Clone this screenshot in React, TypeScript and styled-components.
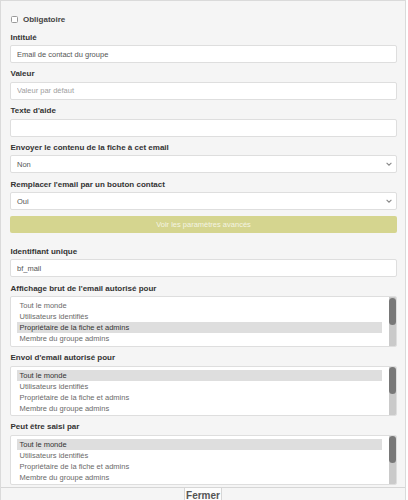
import React from "react"
import styled, { createGlobalStyle } from "styled-components"

const GlobalStyle = createGlobalStyle`
  html, body {
    margin: 0;
    background: #fff;
    font-family: "Liberation Sans", Arial, Helvetica, sans-serif;
  }
  * {
    box-sizing: border-box;
  }
`

const OPTIONS = [
  "Tout le monde",
  "Utilisateurs identifiés",
  "Propriétaire de la fiche et admins",
  "Membre du groupe admins",
  "Membre du groupe Equipe",
]

const Chevron = () => (
  <svg width="6" height="4" viewBox="0 0 6 4">
    <polyline points="0.6,0.8 3,3.2 5.4,0.8" fill="none" stroke="#8a8a8a" strokeWidth="1.1" />
  </svg>
)

const ListBox = ({ selected }: { selected: number }) => (
  <List>
    <Options>
      {OPTIONS.map((label, i) => (
        <Option key={label} $selected={i === selected}>
          {label}
        </Option>
      ))}
    </Options>
    <Track>
      <Thumb />
    </Track>
  </List>
)

const App = () => {
  return (
    <>
      <GlobalStyle />
      <Panel>
        <Body>
          <CheckRow>
            <CheckBox />
            <CheckLabel>Obligatoire</CheckLabel>
          </CheckRow>

          <Field>
            <Label>Intitulé</Label>
            <TextInput readOnly defaultValue="Email de contact du groupe" />
          </Field>
          <Field>
            <Label>Valeur</Label>
            <TextInput readOnly placeholder="Valeur par défaut" />
          </Field>
          <Field>
            <Label>Texte d'aide</Label>
            <TextInput readOnly />
          </Field>
          <Field>
            <Label>Envoyer le contenu de la fiche à cet email</Label>
            <SelectBox>
              <span>Non</span>
              <Chevron />
            </SelectBox>
          </Field>
          <Field>
            <Label>Remplacer l'email par un bouton contact</Label>
            <SelectBox>
              <span>Oui</span>
              <Chevron />
            </SelectBox>
          </Field>

          <AdvancedButton type="button">Voir les paramètres avancés</AdvancedButton>

          <Field>
            <Label>Identifiant unique</Label>
            <TextInput readOnly defaultValue="bf_mail" />
          </Field>
          <Field>
            <Label>Affichage brut de l'email autorisé pour</Label>
            <ListBox selected={2} />
          </Field>
          <Field>
            <Label>Envoi d'email autorisé pour</Label>
            <ListBox selected={0} />
          </Field>
          <Field>
            <Label>Peut être saisi par</Label>
            <ListBox selected={0} />
          </Field>
        </Body>
        <Footer>
          <CloseButton type="button">Fermer</CloseButton>
        </Footer>
      </Panel>
    </>
  )
}

export default App

const Panel = styled.div`
  width: 406px;
  height: 500px;
  display: flex;
  flex-direction: column;
  background: #f5f5f5;
  border: 1px solid #dadada;
  border-bottom: none;
  overflow: hidden;
`

const Body = styled.div`
  height: 486px;
  flex: none;
  overflow: hidden;
  padding: 13px 8px 0 9px;
`

const CheckRow = styled.div`
  display: flex;
  align-items: center;
  height: 10px;
  margin-bottom: 8.5px;
  padding-left: 1px;
`

const CheckBox = styled.span`
  width: 7px;
  height: 7px;
  border: 1px solid #9a9a9a;
  border-radius: 1.5px;
  background: #fff;
  margin-right: 5px;
`

const CheckLabel = styled.span`
  font-size: 8px;
  font-weight: bold;
  color: #444;
`

const Field = styled.div`
  margin-bottom: 6.3px;
`

const Label = styled.label`
  display: block;
  font-size: 8px;
  line-height: 10px;
  font-weight: bold;
  color: #333;
  margin-bottom: 2.5px;
  padding-left: 0.5px;
`

const TextInput = styled.input`
  display: block;
  width: 100%;
  height: 18px;
  margin: 0;
  padding: 0 6px;
  border: 1px solid #dedede;
  border-radius: 2px;
  background: #fff;
  font-family: inherit;
  font-size: 7.5px;
  color: #555;
  outline: none;

  &::placeholder {
    color: #a0a0a0;
  }
`

const SelectBox = styled.div`
  display: flex;
  align-items: center;
  justify-content: space-between;
  height: 18px;
  padding: 0 4px 0 6px;
  border: 1px solid #dedede;
  border-radius: 2px;
  background: #fff;
  font-size: 7.5px;
  color: #555;
`

const AdvancedButton = styled.button`
  display: block;
  width: 100%;
  height: 17px;
  margin: 1.2px 0 13.5px;
  padding: 0;
  border: none;
  border-radius: 2px;
  background: #d5d58f;
  font-family: inherit;
  font-size: 7.5px;
  color: #f4f4e2;
`

const List = styled.div`
  display: flex;
  height: 50.5px;
  padding-left: 5.5px;
  border: 1px solid #dedede;
  border-radius: 2px;
  background: #fff;
  overflow: hidden;
`

const Options = styled.div`
  flex: 1;
  margin-right: 7px;
  padding-top: 3px;
  overflow: hidden;
`

const Option = styled.div<{ $selected: boolean }>`
  height: 11px;
  line-height: 11px;
  padding-left: 3px;
  font-size: 7.5px;
  white-space: nowrap;
  color: ${p => (p.$selected ? "#333" : "#6a6a6a")};
  background: ${p => (p.$selected ? "#dedede" : "transparent")};
`

const Track = styled.div`
  width: 7.5px;
  flex: none;
  background: #cacaca;
`

const Thumb = styled.div`
  height: 27px;
  margin-top: 0.5px;
  border-radius: 4px;
  background: #787878;
`

const Footer = styled.div`
  flex: 1;
  display: flex;
  justify-content: center;
  border-top: 1px solid #d6d6d6;
  background: #f5f5f5;
`

const CloseButton = styled.button`
  height: 16px;
  margin: -1px 0 0;
  padding: 0 1.5px;
  border: 1px solid #d6d6d6;
  border-bottom: none;
  border-radius: 0;
  background: #fcfcfc;
  font-family: inherit;
  font-size: 10px;
  font-weight: bold;
  line-height: 14px;
  color: #555;
`
